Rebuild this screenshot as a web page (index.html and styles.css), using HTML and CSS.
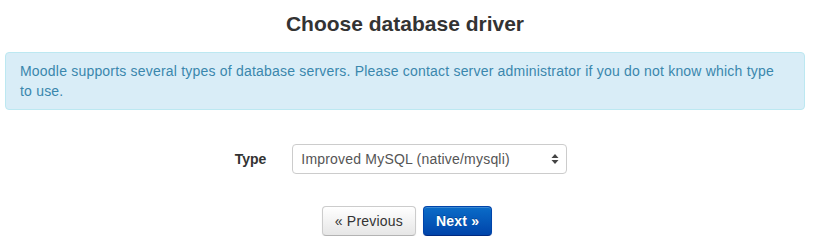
FILE: index.html
```html
<!DOCTYPE html>
<html>
<head>
<meta charset="utf-8">
<link rel="stylesheet" href="styles.css">
</head>
<body>
<div class="page">
  <h2 class="title">Choose database driver</h2>
  <div class="alert">Moodle supports several types of database servers. Please contact server administrator if you do not know which type to use.</div>
  <form class="form">
    <div class="row">
      <label class="label" for="dbtype">Type</label>
      <div class="select">
        <span class="select-text">Improved MySQL (native/mysqli)</span>
        <svg class="arrows" width="8" height="12" viewBox="0 0 8 12"><path d="M4 1 L7.5 5 L0.5 5 Z M4 11 L7.5 7 L0.5 7 Z" fill="#444"/></svg>
      </div>
    </div>
    <div class="buttons">
      <button type="button" class="btn">« Previous</button>
      <button type="button" class="btn btn-primary">Next »</button>
    </div>
  </form>
</div>
</body>
</html>
```
FILE: styles.css
```css
html, body {
  margin: 0;
  padding: 0;
  background: #fff;
}
body {
  font-family: "Liberation Sans", Arial, sans-serif;
  font-size: 14px;
  line-height: 20px;
  color: #333;
}
.page {
  padding: 0 12px 0 5px;
}
.title {
  margin: 0;
  padding-top: 11px;
  height: 52px;
  box-sizing: border-box;
  font-size: 21px;
  line-height: 26px;
  font-weight: bold;
  text-align: center;
  color: #333;
}
.alert {
  background: #d9edf7;
  border: 1px solid #bce8f1;
  border-radius: 4px;
  color: #3a87ad;
  padding: 8px 20px 8px 14px;
  letter-spacing: 0.2px;
}
.form {
  margin: 0;
}
.row {
  display: flex;
  align-items: center;
  justify-content: center;
  margin-top: 34px;
  padding-right: 8px;
}
.label {
  font-weight: bold;
  color: #333;
  margin-right: 26px;
}
.select {
  width: 275px;
  height: 30px;
  box-sizing: border-box;
  border: 1px solid #ccc;
  border-radius: 4px;
  background: #fff;
  display: flex;
  align-items: center;
  justify-content: space-between;
  padding: 0 7px 0 8px;
  color: #555;
  letter-spacing: 0.2px;
}
.arrows {
  display: block;
}
.buttons {
  display: flex;
  justify-content: center;
  gap: 7px;
  margin-top: 32px;
  padding-left: 4px;
}
.btn {
  font-family: "Liberation Sans", Arial, sans-serif;
  font-size: 14px;
  line-height: 20px;
  padding: 4px 12px;
  height: 30px;
  box-sizing: border-box;
  border-radius: 4px;
  border: 1px solid #ccc;
  border-bottom-color: #b3b3b3;
  background: linear-gradient(to bottom, #ffffff, #e6e6e6);
  color: #333;
  box-shadow: inset 0 1px 0 rgba(255,255,255,.2), 0 1px 2px rgba(0,0,0,.05);
  margin: 0;
  letter-spacing: 0.2px;
}
.btn-primary {
  color: #fff;
  font-weight: bold;
  background: linear-gradient(to bottom, #0a6cc8, #0044aa);
  border-color: #0044aa #0044aa #002a80;
  text-shadow: 0 -1px 0 rgba(0,0,0,.25);
}
```
